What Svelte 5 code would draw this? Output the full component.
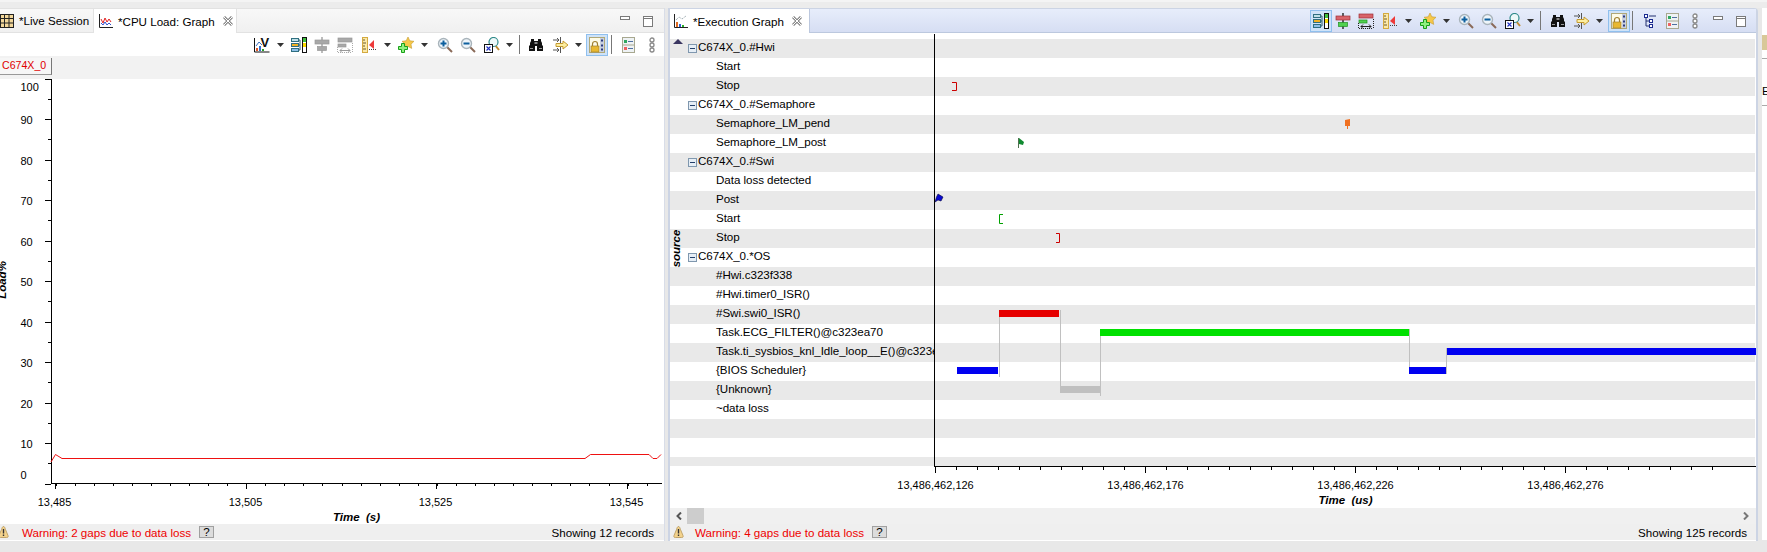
<script>
  // page x of each toolbar item's centre, turned into flow margins below
  const leftTools = [
    ['chartv', 262], ['dd', 280], ['tree', 299], ['alignoff', 322], ['spreadoff', 344.5],
    ['ruler', 369], ['dd', 387.5], ['star', 406], ['dd', 424.5], ['zoomin', 444.5],
    ['zoomout', 468], ['zoomfit', 491.5], ['dd', 509.5], ['sep', 519], ['bino', 535.5],
    ['arrows', 561], ['dd', 578.5], ['lock', 597, true], ['sep', 611], ['list', 628.5], ['chain', 652]
  ];
  const rightTools = [
    ['tree', 1320.5, true], ['align', 1343], ['spread', 1366], ['ruler', 1389.5], ['dd', 1408.5],
    ['star', 1428], ['dd', 1446.5], ['zoomin', 1465.5], ['zoomout', 1488.5], ['zoomfit', 1512.5],
    ['dd', 1530.5], ['sep', 1540], ['bino', 1557.5], ['arrows', 1581.5], ['dd', 1599.5],
    ['lock', 1618.5, true], ['sep', 1632], ['tree2', 1649.5], ['list', 1673], ['chain', 1695],
    ['min', 1718], ['max', 1740.5]
  ];
  const leftWin = [['min', 625], ['max', 648]];

  const widths = { dd: 7, sep: 1, min: 10, max: 10 };
  function flow(items, origin) {
    let prev = origin;
    return items.map(([name, x, on]) => {
      const w = on ? 22 : (widths[name] ?? 16);
      const gap = x - w / 2 - prev;
      prev = x + w / 2;
      return { name, w, gap, on };
    });
  }

  const rows = [
    { t: 'C674X_0.#Hwi', g: true }, { t: 'Start' }, { t: 'Stop' },
    { t: 'C674X_0.#Semaphore', g: true }, { t: 'Semaphore_LM_pend' }, { t: 'Semaphore_LM_post' },
    { t: 'C674X_0.#Swi', g: true }, { t: 'Data loss detected' }, { t: 'Post' }, { t: 'Start' }, { t: 'Stop' },
    { t: 'C674X_0.*OS', g: true }, { t: '#Hwi.c323f338' }, { t: '#Hwi.timer0_ISR()' }, { t: '#Swi.swi0_ISR()' },
    { t: 'Task.ECG_FILTER()@c323ea70' }, { t: 'Task.ti_sysbios_knl_Idle_loop__E()@c323ea70' },
    { t: '{BIOS Scheduler}' }, { t: '{Unknown}' }, { t: '~data loss' }, { t: '' }, { t: '' }, { t: '' }
  ];

  const bars = [
    { x: 999, w: 60, y: 310, c: '#e60000' },
    { x: 1100, w: 309, y: 329, c: '#00e000' },
    { x: 957, w: 41, y: 367, c: '#0000f0' },
    { x: 1409, w: 37, y: 367, c: '#0000f0' },
    { x: 1447, w: 309, y: 348, c: '#0000f0' },
    { x: 1060, w: 40, y: 386, c: '#c0c0c0' }
  ];
  const links = [
    [999.5, 310, 377], [1060.5, 310, 393], [1100.5, 329, 396], [1409.5, 329, 374], [1446.5, 348, 374]
  ];

  const execMajor = [935.5, 1145.5, 1355.5, 1565.5];
  const execLabels = ['13,486,462,126', '13,486,462,176', '13,486,462,226', '13,486,462,276'];
  const execMinor = Array.from({ length: 38 }, (_, i) => 935.5 + i * 21);

  const cpuMajor = [55.5, 246.5, 436.5, 627.5];
  const cpuLabels = ['13,485', '13,505', '13,525', '13,545'];
  const cpuMinor = Array.from({ length: 32 }, (_, i) => 55.5 + i * 19.07);
  const yVals = [100, 90, 80, 70, 60, 50, 40, 30, 20, 10, 0];
  const yPos = (v) => Math.round(483.5 - v * 4.05) + 0.5;
  const yLabel = (v) => (v === 100 ? 87 : v === 0 ? 475 : yPos(v) + 0.5);
</script>

{#snippet glass(extra)}
  <line x1="10" y1="10" x2="15" y2="15" stroke="#8a6a58" stroke-width="2"/>
  <circle cx="6.5" cy="6.5" r="5" fill="#eef5fa" stroke="#a9b4bb" stroke-width="1.4"/>
  {@render extra()}
{/snippet}
{#snippet plusMark()}
  <path d="M3.5 6.5h6M6.5 3.5v6" stroke="#0d5f9e" stroke-width="2"/>
{/snippet}
{#snippet minusMark()}
  <path d="M3.5 6.5h6" stroke="#0d5f9e" stroke-width="2"/>
{/snippet}

{#snippet icon(name)}
  {#if name === 'chartv'}
    <svg width="16" height="16" viewBox="0 0 16 16">
      <path d="M.5 1v14h15" fill="none" stroke="#111"/>
      <path d="M2 9l3-4 3 3" fill="none" stroke="#3a6fc0"/>
      <rect x="2" y="11" width="2" height="3" fill="#e0582a"/><rect x="5" y="9" width="2" height="5" fill="#2f6fd0"/><rect x="8" y="12" width="2" height="2" fill="#2aa02a"/>
      <text x="6.5" y="9.5" class="v">V</text>
    </svg>
  {:else if name === 'tree'}
    <svg width="16" height="16" viewBox="0 0 16 16">
      <path d="M7 3h2M7 8h2M7 13h2M9 3v10" stroke="#2f5f6a" fill="none"/>
      <rect x=".5" y="1.5" width="7" height="3" fill="#bfe0e6" stroke="#2f6f80"/>
      <rect x=".5" y="6.5" width="7" height="3" fill="#f0b020" stroke="#2f6f80"/>
      <rect x=".5" y="11.5" width="7" height="3" fill="#8fc0e8" stroke="#2f6f80"/>
      <rect x="11.5" y=".5" width="4" height="15" fill="#fff" stroke="#111"/>
      <rect x="12" y="1" width="3" height="4" fill="#40c040"/><rect x="12" y="6" width="3" height="4" fill="#f8d800"/>
    </svg>
  {:else if name === 'align' || name === 'alignoff'}
    {@const off = name === 'alignoff'}
    <svg width="16" height="16" viewBox="0 0 16 16">
      <line x1="8" y1="0" x2="8" y2="16" stroke={off ? '#a0a0a0' : '#222'} stroke-width="1.4"/>
      <rect x="1" y="3" width="14" height="4" fill={off ? '#a8a8a8' : '#d8646a'} stroke={off ? '#999' : '#a03038'} stroke-width=".7"/>
      <rect x="3.5" y="9.5" width="9" height="4" fill={off ? '#a8a8a8' : '#50d050'} stroke={off ? '#999' : '#209020'} stroke-width=".7"/>
    </svg>
  {:else if name === 'spread' || name === 'spreadoff'}
    {@const off = name === 'spreadoff'}
    <svg width="16" height="16" viewBox="0 0 16 16">
      <rect x="1" y="1" width="14" height="4" fill={off ? '#a8a8a8' : '#d8646a'} stroke={off ? '#999' : '#a03038'} stroke-width=".7"/>
      <rect x="1" y="7" width="8" height="3" fill={off ? '#a8a8a8' : '#50d050'} stroke={off ? '#999' : '#209020'} stroke-width=".7"/>
      <path d="M3 13.5h10M3 13.5l2-2M3 13.5l2 2M13 13.5l-2-2M13 13.5l-2 2" stroke={off ? '#999' : '#222'} fill="none"/>
      <path d="M.5 10v6M15.5 6v10M1 15.5h14" stroke={off ? '#aaa' : '#222'} stroke-dasharray="1 1" fill="none"/>
    </svg>
  {:else if name === 'ruler'}
    <svg width="16" height="16" viewBox="0 0 16 16">
      <rect x="1.5" y=".5" width="5" height="15" fill="#fbe9a8" stroke="#d4aa40"/>
      <path d="M2 3h2M2 6h3M2 9h2M2 12h3" stroke="#6a5a30"/>
      <path d="M8 8l5-5v9z" fill="#ee3a3a"/>
      <path d="M8 12.5h8" stroke="#444" stroke-dasharray="1 1"/>
    </svg>
  {:else if name === 'star'}
    <svg width="16" height="16" viewBox="0 0 16 16">
      <path d="M10 0l1.8 3.8 4.2.5-3 2.9.7 4.2-3.7-2-3.7 2 .7-4.2-3-2.9 4.2-.5z" fill="#f6c84a" stroke="#c49a30" stroke-width=".6"/>
      <path d="M3.5 6.5h3v3h3v3h-3v3h-3v-3h-3v-3h3z" fill="#90f080" stroke="#18a018"/>
    </svg>
  {:else if name === 'zoomin'}
    <svg width="16" height="16" viewBox="0 0 16 16">{@render glass(plusMark)}</svg>
  {:else if name === 'zoomout'}
    <svg width="16" height="16" viewBox="0 0 16 16">{@render glass(minusMark)}</svg>
  {:else if name === 'zoomfit'}
    <svg width="16" height="16" viewBox="0 0 16 16">
      <line x1="11" y1="8" x2="15" y2="13" stroke="#c08a30" stroke-width="2"/>
      <circle cx="9.5" cy="5" r="4.5" fill="#eef8f8" stroke="#2f8a8a" stroke-width="1.2"/>
      <rect x=".5" y="7.5" width="8" height="8" fill="#fff" stroke="#111"/>
      <path d="M2.5 9.5l4 4M6.5 9.5l-4 4" stroke="#2030c0" stroke-width="1.1"/>
    </svg>
  {:else if name === 'bino'}
    <svg width="16" height="16" viewBox="0 0 16 16">
      <path d="M3 2h3v2h4V2h3v2l1 2v2l1 1v5H9V9H7v5H1V9l1-1V6l1-2z" fill="#111"/>
      <rect x="6.5" y="5" width="3" height="2" fill="#888"/>
      <rect x="2" y="11" width="3" height="1" fill="#999"/><rect x="11" y="11" width="3" height="1" fill="#999"/>
    </svg>
  {:else if name === 'arrows'}
    <svg width="16" height="16" viewBox="0 0 16 16">
      <path d="M0 3h6M4 1l2 2-2 2M7.500 0v6M0 13h6M4 11l2 2-2 2M7.500 10v6" stroke="#555" fill="none"/>
      <path d="M3 6.500h7V4l5 4-5 4V9.500H3z" fill="#fdeea0" stroke="#c49a30"/>
    </svg>
  {:else if name === 'lock'}
    <svg width="16" height="16" viewBox="0 0 16 16">
      <rect x=".5" y=".5" width="15" height="15" fill="#fdfbe8" stroke="#b0a878"/>
      <rect x="11" y="1" width="4" height="14" fill="#c8d0e0"/>
      <path d="M12 3.500h2M12 8.500h2M12 12.500h2" stroke="#2a3a80" stroke-width="2"/>
      <path d="M3.500 9V7a2.500 2.500 0 0 1 5 0v2" fill="none" stroke="#a08030" stroke-width="1.2"/>
      <rect x="2" y="9" width="8" height="6" fill="#e8b830" stroke="#a08030" stroke-width=".7"/>
    </svg>
  {:else if name === 'list'}
    <svg width="16" height="16" viewBox="0 0 16 16">
      <rect x="1.500" y=".5" width="12" height="15" fill="#eef2f4" stroke="#a8a890"/>
      <path d="M1.500 8h12" stroke="#a8a890"/>
      <rect x="3" y="3" width="3" height="3" fill="#30a860"/><rect x="3" y="10" width="3" height="3" fill="#ee6060"/>
      <path d="M7 4.500h5M7 11.500h5" stroke="#5070a0"/>
    </svg>
  {:else if name === 'chain'}
    <svg width="16" height="16" viewBox="0 0 16 16">
      <g fill="#fff" stroke="#8a8a8a" stroke-width="1.3"><circle cx="8" cy="3" r="2"/><circle cx="8" cy="8" r="2"/><circle cx="8" cy="13" r="2"/></g>
    </svg>
  {:else if name === 'tree2'}
    <svg width="16" height="16" viewBox="0 0 16 16">
      <path d="M4 3v10h3M4 8h3M7 3h7" stroke="#223070" fill="none"/>
      <g fill="#fff" stroke="#1a2a90"><rect x="2.500" y="1.500" width="3" height="3"/><rect x="7.500" y="6.500" width="3" height="3"/><rect x="7.500" y="11.500" width="3" height="3"/></g>
    </svg>
  {:else if name === 'min'}
    <svg width="10" height="16" viewBox="0 0 10 16"><rect x=".5" y="3.500" width="9" height="3" fill="#fff" stroke="#7a7a7a"/></svg>
  {:else if name === 'max'}
    <svg width="10" height="16" viewBox="0 0 10 16"><rect x=".5" y="3.500" width="9" height="10" fill="#fff" stroke="#7a7a7a"/><path d="M.5 5.500h9" stroke="#7a7a7a"/></svg>
  {:else if name === 'dd'}
    <svg width="7" height="4" viewBox="0 0 7 4"><path d="M0 0h7L3.500 4z" fill="#333"/></svg>
  {:else if name === 'sep'}
    <span class="sep"></span>
  {/if}
{/snippet}

{#snippet toolbar(items, origin)}
  {#each flow(items, origin) as it}
    <span class="tool" class:on={it.on} style="width:{it.w}px;margin-left:{it.gap}px">{@render icon(it.name)}</span>
  {/each}
{/snippet}

{#snippet closeX()}
  <svg class="close" width="10" height="10" viewBox="0 0 10 10">
    <path d="M1 1l8 8M9 1L1 9" stroke="#8a8a8a" stroke-width="3"/>
    <path d="M1 1l8 8M9 1L1 9" stroke="#fff" stroke-width="1"/>
  </svg>
{/snippet}

{#snippet warnIcon()}
  <svg width="11" height="12" viewBox="0 0 11 12">
    <path d="M5.500 .5c1 0 1.300 1 2 3l2.500 6c.5 1.500 0 2-1.500 2h-6c-1.500 0-2-.5-1.500-2l2.500-6c.7-2 1-3 2-3z" fill="#f3d28c" stroke="#b59658" stroke-width=".8"/>
    <path d="M5.500 3v4.500" stroke="#333" stroke-width="1.400"/><rect x="4.800" y="8.500" width="1.400" height="1.500" fill="#333"/>
  </svg>
{/snippet}

{#snippet status(text, count)}
  <div class="status">
    <span class="warn">{@render warnIcon()}</span>
    <span class="warntext">{text}</span>
    <span class="help">?</span>
    <span class="count">{count}</span>
  </div>
{/snippet}

<div class="page">
  <section class="pane cpu">
    <header class="tabs">
      <div class="tab idle">
        <svg width="14" height="14" viewBox="0 0 14 14">
          <rect x=".5" y=".5" width="13" height="13" fill="#f2d79a" stroke="#222"/>
          <path d="M.5 4.500h13M.5 9h13M4.500 .5v13M9 .5v13" stroke="#222"/>
        </svg>
        <span>*Live Session</span>
      </div>
      <div class="tab active">
        <svg width="14" height="14" viewBox="0 0 14 14">
          <path d="M.5 0v13.500H14" fill="none" stroke="#222"/>
          <path d="M2 5l2 4 2-5 2 4 2-3 2 3" fill="none" stroke="#e02020"/>
          <path d="M2 9l2 2 2-3 2 3 2-2 2 2" fill="none" stroke="#3050d0"/>
        </svg>
        <span>*CPU Load: Graph</span>
        {@render closeX()}
      </div>
      <div class="win">{@render toolbar(leftWin, 237)}</div>
    </header>
    <div class="tools">{@render toolbar(leftTools, 0)}</div>
    <div class="legend"><span class="chip">C674X_0</span></div>
    <svg class="plot" width="664" height="445" viewBox="0 79 664 445">
      <text class="axis-title" transform="translate(6 280) rotate(-90)" text-anchor="middle">Load%</text>
      <path d="M51.500 79v405M45 79.500h6M51 483.500h611" stroke="#000" fill="none"/>
      {#each yVals as v}
        <path d="M45 {yPos(v)}h6" stroke="#000"/>
        {#if v > 0}<path d="M48 {yPos(v) + 20}h3" stroke="#000"/>{/if}
        <text class="tick" x="20.500" y={yLabel(v)} dominant-baseline="central">{v}</text>
      {/each}
      {#each cpuMinor as x}<path d="M{Math.round(x) + 0.5} 483v3" stroke="#000"/>{/each}
      {#each cpuMajor as x, i}
        <path d="M{x} 483v6" stroke="#000"/>
        <text class="tick" x={x - 1} y="502" text-anchor="middle" dominant-baseline="central">{cpuLabels[i]}</text>
      {/each}
      <text class="axis-title" x="356.500" y="517" text-anchor="middle" dominant-baseline="central">Time  (s)</text>
      <polyline points="51,462 55.500,454.500 62,458.500 585,458.500 590.500,454.500 649,454.500 653,458.500 657,458.500 661,454.500" fill="none" stroke="#ee1111"/>
    </svg>
    {@render status('Warning: 2 gaps due to data loss', 'Showing 12 records')}
  </section>

  <section class="pane exec">
    <header class="tabs blue">
      <div class="tab active">
        <svg width="14" height="14" viewBox="0 0 14 14">
          <path d="M.5 0v13.500H14" fill="none" stroke="#222"/>
          <path d="M2 6l3-3 3 2 4-3" fill="none" stroke="#8a9aa0" stroke-dasharray="1 1"/>
          <rect x="2" y="8" width="2" height="5" fill="#e06a20"/><rect x="5" y="10" width="2" height="3" fill="#3060d0"/><rect x="8" y="11" width="2" height="2" fill="#28b028"/>
        </svg>
        <span>*Execution Graph</span>
        {@render closeX()}
      </div>
      {@render toolbar(rightTools, 810)}
    </header>
    <div class="graph">
      <div class="list">
        {#each rows as r, i}
          <div class="row" class:shade={i % 2 === 0} class:last={i === rows.length - 1}>
            <span class="label" class:group={r.g}>
              {#if r.g}<i class="minus"></i>{/if}{r.t}
            </span>
          </div>
        {/each}
      </div>
      <div class="axis"></div>
      <svg class="overlay" width="1086" height="475" viewBox="670 33 1086 475">
        <path d="M673 44l5-5 5 5z" fill="#3a3560"/>
        <text class="axis-title" transform="translate(680 248.500) rotate(-90)" text-anchor="middle">source</text>
        <path d="M934.500 34v432.500M934 466.500h822" stroke="#000" fill="none"/>

        <path d="M952 82.500h4.500v8h-4.500M1056 233.500h3.500v9h-3.500" fill="none" stroke="#cc0000"/>
        <path d="M1003 214.500h-3.500v9h3.500" fill="none" stroke="#00a000"/>
        <path d="M1345 120l5-1v7h-2v3h-1v-3h-2z" fill="#f07020"/>
        <path d="M1018.500 138v10" stroke="#507050"/>
        <path d="M1019 138l5 4-1 3-4-1z" fill="#108a30"/>
        <path d="M935 202l1.500-5 1.500-3 5 3-2 4-3-1z" fill="#0a0ad0" stroke="#000040" stroke-width=".6"/>

        {#each links as [x, a, b]}<path d="M{x} {a}V{b}" stroke="#c0c0c0"/>{/each}
        {#each bars as b}<rect x={b.x} y={b.y} width={b.w} height="7" fill={b.c}/>{/each}

        {#each execMinor as x}<path d="M{x} 466v4" stroke="#000"/>{/each}
        {#each execMajor as x, i}
          <path d="M{x} 466v7" stroke="#000"/>
          <text class="tick" x={x} y="485" text-anchor="middle" dominant-baseline="central">{execLabels[i]}</text>
        {/each}
        <text class="axis-title" x="1345.500" y="500" text-anchor="middle" dominant-baseline="central">Time  (us)</text>
      </svg>
      <div class="scroll">
        <span class="arrow">
          <svg width="6" height="8" viewBox="0 0 6 8"><path d="M5 0.500L1.500 4 5 7.500" fill="none" stroke="#555" stroke-width="2"/></svg>
        </span>
        <span class="thumb"></span>
        <span class="arrow end">
          <svg width="6" height="8" viewBox="0 0 6 8"><path d="M1 0.500L4.500 4 1 7.500" fill="none" stroke="#777" stroke-width="2"/></svg>
        </span>
      </div>
    </div>
    {@render status('Warning: 4 gaps due to data loss', 'Showing 125 records')}
  </section>

  <aside class="sliver">
    <span class="swatch"></span>
    <span class="rule"></span>
    <span class="letter">E</span>
    <span class="rule"></span>
  </aside>
</div>

<style>
  :global(body) {
    margin: 0;
    background: #e8e8e8;
  }

  .page {
    width: 1767px;
    height: 552px;
    box-sizing: border-box;
    padding-top: 8px;
    display: flex;
    align-items: flex-start;
    overflow: hidden;
    background: linear-gradient(#f4f4f4 0 2px, #ececec 2px 8px, #e8e8e8 8px);
    font: 11.6px "Liberation Sans", Arial, sans-serif;
    color: #000;
  }

  .pane {
    box-sizing: border-box;
    display: flex;
    flex-direction: column;
    height: 533px;
    background: #fff;
  }

  .cpu {
    width: 665px;
    border-right: 1px solid #d8dde8;
  }

  .exec {
    width: 1090px;
    margin-left: 3px;
    border: 2px solid #ccd4e4;
    border-width: 1px 2px 1px 2px;
    border-top-right-radius: 4px;
  }

  .tabs {
    height: 25px;
    flex: none;
    box-sizing: border-box;
    display: flex;
    align-items: stretch;
    background: linear-gradient(#f8f8f8, #f0f0f0);
    border-top: 1px solid #e2e2e2;
    border-bottom: 1px solid #e2e2e2;
  }

  .tabs.blue {
    height: 24px;
    background: linear-gradient(#e7edfb, #d6def3);
    border: 0;
    border-bottom: 1px solid #bcc8de;
  }

  .tab {
    display: flex;
    align-items: center;
    gap: 5px;
    box-sizing: border-box;
    white-space: nowrap;
  }

  .tab.idle {
    width: 93px;
    padding-right: 3px;
  }

  .cpu .tab.active {
    width: 144px;
    padding-left: 5px;
    background: #fff;
    margin-bottom: -1px;
    border-left: 1px solid #e2e2e2;
    border-right: 1px solid #e2e2e2;
  }

  .exec .tab.active {
    width: 140px;
    padding-left: 4px;
    background: #fff;
    margin-bottom: -1px;
    border-right: 1px solid #bcc8de;
  }

  .close {
    margin-left: 3px;
  }

  .win {
    display: flex;
    align-items: center;
  }

  .tabs.blue > .tool {
    align-self: center;
  }

  .tools {
    height: 23px;
    flex: none;
    display: flex;
    align-items: center;
  }

  .tool {
    flex: none;
    display: flex;
    align-items: center;
    justify-content: center;
    box-sizing: border-box;
  }

  .tool.on {
    height: 22px;
    background: #cfe3f8;
    border: 1px solid #90c0ee;
  }

  .sep {
    display: block;
    width: 1px;
    height: 19px;
    background: #777;
  }

  .legend {
    height: 23px;
    flex: none;
    box-sizing: border-box;
    padding-top: 2px;
    background: #f2f2f2;
  }

  .chip {
    display: block;
    width: 52px;
    height: 17px;
    box-sizing: border-box;
    padding-left: 2px;
    font-size: 10.6px;
    line-height: 15px;
    color: #e00000;
    background: #f6f6f6;
    border-right: 1px solid #777;
    border-bottom: 1px solid #999;
  }

  .plot,
  .overlay {
    display: block;
    flex: none;
  }

  .tick {
    font: 11px "Liberation Sans", Arial, sans-serif;
    fill: #000;
  }

  .axis-title {
    font: italic bold 11.5px "Liberation Sans", Arial, sans-serif;
    white-space: pre;
    fill: #000;
  }

  .v {
    font: bold 13px "Liberation Sans", Arial, sans-serif;
    fill: #111;
  }

  .status {
    height: 16px;
    flex: none;
    display: flex;
    align-items: center;
    background: #efefef;
    border-bottom: 1px solid #fff;
  }

  .warn {
    display: flex;
    width: 24px;
    margin-left: -2px;
  }

  .exec .warn {
    width: 22px;
    margin-left: 3px;
  }

  .warntext {
    color: #ee0000;
    width: 177px;
  }

  .help {
    width: 15px;
    height: 12px;
    box-sizing: border-box;
    line-height: 10px;
    text-align: center;
    background: #dcdcdc;
    border: 1px solid #a0a0a0;
  }

  .count {
    margin-left: auto;
    padding-right: 9px;
  }

  .cpu .count {
    padding-right: 10px;
  }

  .graph {
    position: relative;
    flex: none;
    height: 491px;
    display: flex;
    flex-direction: column;
  }

  .overlay {
    position: absolute;
    left: 0;
    top: 0;
    pointer-events: none;
  }

  .list {
    margin-top: 6px;
    flex: none;
  }

  .row {
    height: 19px;
    display: flex;
    margin-right: 1px;
  }

  .row.shade {
    background: #e9e9e9;
  }

  .row.last {
    height: 9px;
  }

  .label {
    width: 264px;
    box-sizing: border-box;
    padding-left: 46px;
    overflow: hidden;
    white-space: nowrap;
    line-height: 15px;
    letter-spacing: -.05px;
  }

  .label.group {
    padding-left: 18px;
    display: flex;
    align-items: flex-start;
  }

  .minus {
    flex: none;
    position: relative;
    width: 9px;
    height: 9px;
    box-sizing: border-box;
    margin: 5px 1px 0 0;
    background: #e6eef6;
    border: 1px solid #7f97ae;
  }

  .minus::after {
    content: "";
    position: absolute;
    left: 1px;
    right: 1px;
    top: 3px;
    height: 1px;
    background: #23406a;
  }

  .axis {
    height: 42px;
    flex: none;
  }

  .scroll {
    height: 16px;
    flex: none;
    display: flex;
    align-items: stretch;
    background: #f0f0f0;
  }

  .arrow {
    width: 17px;
    display: flex;
    align-items: center;
    justify-content: center;
  }

  .arrow.end {
    margin-left: auto;
    padding-right: 1px;
    width: 18px;
  }

  .thumb {
    width: 17px;
    background: #cdcdcd;
  }

  .sliver {
    margin-left: 4px;
    width: 5px;
    height: 532px;
    flex: none;
    display: flex;
    flex-direction: column;
    background: #fff;
    overflow: hidden;
  }

  .swatch {
    height: 15px;
    margin-top: 27px;
    background: #d8c898;
  }

  .rule {
    height: 1px;
    margin-top: 8px;
    background: #aaa;
  }

  .letter {
    margin-top: 26px;
    line-height: 12px;
    height: 12px;
  }
</style>
